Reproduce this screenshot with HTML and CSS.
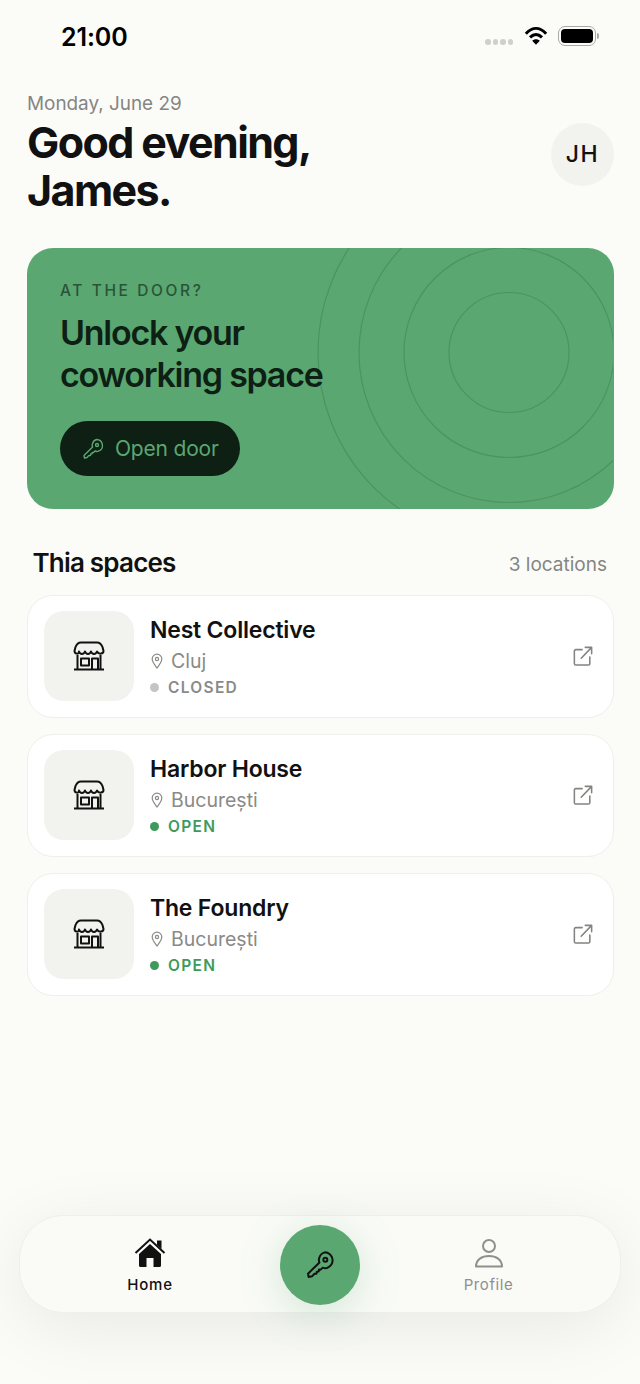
FILE: index.html
```html
<!DOCTYPE html>
<html lang="en">
<head>
  <meta charset="UTF-8" />
  <meta name="viewport" content="width=device-width, initial-scale=1" />
  <title>Thia - Home</title>
  <link rel="stylesheet" href="styles.css">
</head>
<body>
  <div class="statusBar">
    <span class="clock">21:00</span>
    <div class="statusIcons">
      <div class="signal"><i></i><i></i><i></i><i></i></div>
      <svg class="wifi" width="24" height="20" viewBox="0 0 26 20">
        <path d="M2 7.500C9-.2 17-.2 24 7.500" fill="none" stroke="#000" stroke-width="3.200"/>
        <path d="M6.500 11.500c4.200-4.300 8.800-4.300 13 0" fill="none" stroke="#000" stroke-width="3.200"/>
        <path d="M13 19.500 8.900 15.200c2.500-2.200 5.700-2.200 8.200 0z" fill="#000"/>
      </svg>
      <div class="battery"><div class="batteryFill"></div></div>
      <div class="batteryCap"></div>
    </div>
  </div>

  <header class="header">
    <div>
      <div class="date">Monday, June 29</div>
      <h1>Good evening,<br>James.</h1>
    </div>
    <div class="avatar">JH</div>
  </header>

  <section class="hero">
    <svg class="rings" width="586" height="261" viewBox="0 0 586 261">
      <circle cx="482" cy="104.500" r="60"/>
      <circle cx="482" cy="104.500" r="105"/>
      <circle cx="482" cy="104.500" r="150"/>
      <circle cx="482" cy="104.500" r="191"/>
    </svg>
    <div class="eyebrow">AT THE DOOR?</div>
    <h2>Unlock your<br>coworking space</h2>
    <button class="openBtn">
      <svg width="24" height="24" viewBox="0 0 24 24" fill="none" stroke="#5aa772" stroke-width="1.400" stroke-linejoin="round">
        <path d="M15.500 2.500a6 6 0 0 1 1.800 11.700c-1.100.4-2.300.3-3.300-.2l-1.500 1.500-1.300-.1-.2 1.500-1.400.1-.2 1.500-1.500.1L6 20.500 3.500 21 3 18.500l8.600-8.400c-.5-1-.6-2.100-.2-3.200a6 6 0 0 1 4.100-4.400z"/>
        <circle cx="16" cy="8" r="1.500"/>
      </svg>
      Open door
    </button>
  </section>

  <div class="sectionHead">
    <h3>Thia spaces</h3>
    <span class="count">3 locations</span>
  </div>

  <div class="spaces">
    <div class="space">
      <div class="thumb">
        <svg class="shop" width="32" height="30" viewBox="0 0 32 30" fill="none" stroke="#111" stroke-width="2" stroke-linejoin="round">
          <path d="M8 1.500h16c3 0 4.500 2 5.500 4.500l1 4c0 2.800-4.500 4-6.500 0.500-1 3.200-5 3.200-6 0-1 3.200-5 3.200-6 0-1 3.200-5 3.200-6 0C6 14 1.500 12.800 1.500 10l1-4C3.500 3.500 5 1.500 8 1.500z"/>
          <path d="M4.500 14v14.500M27.500 14v14.500M1 28.500h30"/>
          <rect x="8" y="17.500" width="8" height="7"/>
          <path d="M19 28v-10.500h6V28"/>
        </svg>
      </div>
      <div class="info">
        <div class="name">Nest Collective</div>
        <div class="place">
          <svg width="14" height="16" viewBox="0 0 14 16" fill="none" stroke="#8a8a86" stroke-width="1.200"><path d="M7 15C4.500 11.500 2.200 9 2.200 6a4.800 4.800 0 0 1 9.600 0c0 3-2.300 5.500-4.800 9z"/><circle cx="7" cy="6" r="1.600"/></svg>
          Cluj
        </div>
        <div class="status closed"><i></i>CLOSED</div>
      </div>
      <svg class="extLink" width="20" height="20" viewBox="0 0 22 22" fill="none" stroke="#838380" stroke-width="1.700" stroke-linejoin="round" stroke-linecap="round">
        <path d="M10 4H3a1.500 1.500 0 0 0-1.500 1.500v14A1.500 1.500 0 0 0 3 21h14a1.500 1.500 0 0 0 1.500-1.500V12"/>
        <path d="M9 13.500 20.500 1.500M13.500 1.500h7v7"/>
      </svg>
    </div>

    <div class="space">
      <div class="thumb">
        <svg class="shop" width="32" height="30" viewBox="0 0 32 30" fill="none" stroke="#111" stroke-width="2" stroke-linejoin="round">
          <path d="M8 1.500h16c3 0 4.500 2 5.500 4.500l1 4c0 2.800-4.500 4-6.500 0.500-1 3.200-5 3.200-6 0-1 3.200-5 3.200-6 0-1 3.200-5 3.200-6 0C6 14 1.500 12.800 1.500 10l1-4C3.500 3.500 5 1.500 8 1.500z"/>
          <path d="M4.500 14v14.500M27.500 14v14.500M1 28.500h30"/>
          <rect x="8" y="17.500" width="8" height="7"/>
          <path d="M19 28v-10.500h6V28"/>
        </svg>
      </div>
      <div class="info">
        <div class="name">Harbor House</div>
        <div class="place">
          <svg width="14" height="16" viewBox="0 0 14 16" fill="none" stroke="#8a8a86" stroke-width="1.200"><path d="M7 15C4.500 11.500 2.200 9 2.200 6a4.800 4.800 0 0 1 9.600 0c0 3-2.300 5.500-4.800 9z"/><circle cx="7" cy="6" r="1.600"/></svg>
          București
        </div>
        <div class="status open"><i></i>OPEN</div>
      </div>
      <svg class="extLink" width="20" height="20" viewBox="0 0 22 22" fill="none" stroke="#838380" stroke-width="1.700" stroke-linejoin="round" stroke-linecap="round">
        <path d="M10 4H3a1.500 1.500 0 0 0-1.500 1.500v14A1.500 1.500 0 0 0 3 21h14a1.500 1.500 0 0 0 1.500-1.500V12"/>
        <path d="M9 13.500 20.500 1.500M13.500 1.500h7v7"/>
      </svg>
    </div>

    <div class="space">
      <div class="thumb">
        <svg class="shop" width="32" height="30" viewBox="0 0 32 30" fill="none" stroke="#111" stroke-width="2" stroke-linejoin="round">
          <path d="M8 1.500h16c3 0 4.500 2 5.500 4.500l1 4c0 2.800-4.500 4-6.500 0.500-1 3.200-5 3.200-6 0-1 3.200-5 3.200-6 0-1 3.200-5 3.200-6 0C6 14 1.500 12.800 1.500 10l1-4C3.500 3.500 5 1.500 8 1.500z"/>
          <path d="M4.500 14v14.500M27.500 14v14.500M1 28.500h30"/>
          <rect x="8" y="17.500" width="8" height="7"/>
          <path d="M19 28v-10.500h6V28"/>
        </svg>
      </div>
      <div class="info">
        <div class="name">The Foundry</div>
        <div class="place">
          <svg width="14" height="16" viewBox="0 0 14 16" fill="none" stroke="#8a8a86" stroke-width="1.200"><path d="M7 15C4.500 11.500 2.200 9 2.200 6a4.800 4.800 0 0 1 9.600 0c0 3-2.300 5.500-4.800 9z"/><circle cx="7" cy="6" r="1.600"/></svg>
          București
        </div>
        <div class="status open"><i></i>OPEN</div>
      </div>
      <svg class="extLink" width="20" height="20" viewBox="0 0 22 22" fill="none" stroke="#838380" stroke-width="1.700" stroke-linejoin="round" stroke-linecap="round">
        <path d="M10 4H3a1.500 1.500 0 0 0-1.500 1.500v14A1.500 1.500 0 0 0 3 21h14a1.500 1.500 0 0 0 1.500-1.500V12"/>
        <path d="M9 13.500 20.500 1.500M13.500 1.500h7v7"/>
      </svg>
    </div>
  </div>

  <nav class="tabBar">
    <div class="tab active">
      <svg width="32" height="30" viewBox="0 0 32 30">
        <path d="M1.500 15 16 1.500 30.500 15" fill="none" stroke="#111" stroke-width="2"/>
        <path d="M23 2.500h4.500v8.500L23 7z" fill="#111"/>
        <path d="M5 16 16 6l11 10v11.500a1.500 1.500 0 0 1-1.500 1.500H19.500v-9h-7v9H6.500A1.500 1.500 0 0 1 5 27.500z" fill="#111"/>
      </svg>
      <span>Home</span>
    </div>
    <button class="fab">
      <svg width="32" height="32" viewBox="0 0 24 24" fill="none" stroke="#111" stroke-width="1.500" stroke-linejoin="round">
        <path d="M15.500 2.500a6 6 0 0 1 1.800 11.700c-1.100.4-2.300.3-3.300-.2l-1.500 1.500-1.300-.1-.2 1.500-1.400.1-.2 1.500-1.500.1L6 20.500 3.500 21 3 18.500l8.600-8.400c-.5-1-.6-2.100-.2-3.200a6 6 0 0 1 4.100-4.400z"/>
        <circle cx="16" cy="8" r="1.500"/>
      </svg>
    </button>
    <div class="tab profile">
      <svg width="30" height="30" viewBox="0 0 30 30" fill="none" stroke="#8f8f8c" stroke-width="2">
        <circle cx="15" cy="8" r="6"/>
        <path d="M2 28.500c0-7 6-10.500 13-10.500s13 3.500 13 10.500z" stroke-linejoin="round"/>
      </svg>
      <span>Profile</span>
    </div>
  </nav>
</body>
</html>
```

FILE: styles.css
```css
* {
  box-sizing: border-box;
}
body {
  margin: 0;
  width: 640px;
  height: 1384px;
  display: flex;
  flex-direction: column;
  overflow: hidden;
  background: #fbfcf8;
  color: #111;
  font-family: Inter, "Liberation Sans", sans-serif;
}

/* Status bar */
.statusBar {
  height: 72px;
  padding: 0 27px 0 61px;
  display: flex;
  justify-content: space-between;
  align-items: center;
}
.clock {
  margin-top: 1px;
  font-size: 25px;
  font-weight: 600;
  letter-spacing: -0.100px;
  color: #000;
}
.statusIcons {
  display: flex;
  align-items: center;
  margin-top: -1px;
  margin-right: 14px;
}
.signal {
  display: flex;
  gap: 2px;
  margin: 13px 11px 0 0;
}
.signal i {
  width: 5.500px;
  height: 5.500px;
  border-radius: 50%;
  background: #cfcfcd;
}
.wifi {
  margin-right: 10px;
}
.battery {
  width: 38px;
  height: 20px;
  padding: 2px;
  border: 1.500px solid #a9a9a7;
  border-radius: 7px;
}
.batteryFill {
  height: 100%;
  background: #000;
  border-radius: 4px;
}
.batteryCap {
  width: 2px;
  height: 6px;
  margin-left: 1px;
  background: #a9a9a7;
  border-radius: 0 2px 2px 0;
}

/* Header */
.header {
  margin: 21px 26px 0 27px;
  display: flex;
  justify-content: space-between;
  align-items: center;
}
.date {
  font-size: 18.900px;
  line-height: 22px;
  color: #858582;
}
h1 {
  margin: 3px 0 1px;
  font-size: 43px;
  line-height: 48px;
  font-weight: 700;
  letter-spacing: -1.600px;
  color: #111;
}
.avatar {
  width: 63px;
  height: 63px;
  border-radius: 50%;
  background: #f2f2ef;
  display: flex;
  justify-content: center;
  align-items: center;
  font-size: 23px;
  font-weight: 500;
  letter-spacing: 1.500px;
}

/* Hero card */
.hero {
  position: relative;
  overflow: hidden;
  margin: 33px 26.500px 0 27px;
  height: 261px;
  padding: 33px;
  border-radius: 26px;
  background: #5aa772;
}
.rings {
  position: absolute;
  left: 0;
  top: 0;
  fill: none;
  stroke: #4c9363;
  stroke-width: 1.200;
}
.eyebrow {
  position: relative;
  font-size: 15.500px;
  line-height: 20px;
  font-weight: 500;
  letter-spacing: 2.600px;
  color: #2a5438;
}
h2 {
  position: relative;
  margin: 11px 0 0;
  font-size: 34px;
  line-height: 42px;
  font-weight: 600;
  letter-spacing: -1.250px;
  color: #0e1f14;
}
.openBtn {
  position: relative;
  margin-top: 25px;
  height: 55px;
  width: 180px;
  padding: 0 0 0 21px;
  display: flex;
  align-items: center;
  gap: 10px;
  border: none;
  border-radius: 28px;
  background: #0e1f14;
  color: #5aa772;
  font-family: inherit;
  font-size: 21px;
  font-weight: 400;
  letter-spacing: -0.200px;
}

/* Spaces list */
.sectionHead {
  margin: 36px 33px 0 32.500px;
  display: flex;
  justify-content: space-between;
  align-items: center;
  height: 34px;
}
h3 {
  margin: 0;
  font-size: 26px;
  font-weight: 600;
  letter-spacing: -0.800px;
}
.count {
  font-size: 19px;
  color: #858582;
  margin-top: 5px;
}
.spaces {
  margin: 15.500px 26.500px 0 27px;
  display: flex;
  flex-direction: column;
  gap: 16px;
}
.space {
  height: 123px;
  padding: 0 20px 0 16px;
  display: flex;
  align-items: center;
  gap: 16px;
  background: #fff;
  border: 1.500px solid #efefeb;
  border-radius: 26px;
}
.thumb {
  width: 90px;
  height: 90px;
  flex-shrink: 0;
  border-radius: 20px;
  background: #f2f2ee;
  display: flex;
  justify-content: center;
  align-items: center;
}
.info {
  flex: 1;
}
.name {
  margin-top: 2px;
  font-size: 23px;
  line-height: 30px;
  font-weight: 600;
  letter-spacing: -0.200px;
}
.place {
  margin-top: 2px;
  height: 28px;
  display: flex;
  align-items: center;
  gap: 7px;
  font-size: 19.500px;
  color: #8a8a86;
}
.status {
  display: flex;
  align-items: center;
  gap: 9px;
  height: 24px;
  font-size: 15.500px;
  font-weight: 600;
  letter-spacing: 1.300px;
}
.status i {
  width: 9px;
  height: 9px;
  border-radius: 50%;
}
.closed {
  color: #8a8a86;
}
.closed i {
  background: #c4c4c0;
}
.open {
  color: #3d9a5c;
}
.open i {
  background: #3d9a5c;
}
.extLink {
  margin-bottom: 1px;
}

/* Bottom tab bar */
.tabBar {
  margin: auto 19px 71px;
  height: 98px;
  display: grid;
  grid-template-columns: 1fr 80px 1fr;
  align-items: center;
  border: 1.500px solid #efefeb;
  border-radius: 44px;
  background: #fafbf7;
  box-shadow: 0 14px 70px rgba(0, 0, 0, 0.08);
}
.tab {
  padding-top: 4px;
  display: flex;
  flex-direction: column;
  align-items: center;
  gap: 7px;
  font-size: 15px;
  font-weight: 400;
  letter-spacing: 0.800px;
  color: #8f8f8c;
}
.tab.active {
  font-weight: 500;
  color: #111;
}
.tab.profile {
  padding-right: 3px;
  letter-spacing: 0.600px;
}
.tab span {
  line-height: 20px;
}
.fab {
  width: 80px;
  height: 80px;
  margin-top: 2px;
  padding: 0;
  display: flex;
  justify-content: center;
  align-items: center;
  border: none;
  border-radius: 50%;
  background: #5aa772;
  box-shadow: 0 8px 40px rgba(90, 167, 114, 0.25);
}
```
